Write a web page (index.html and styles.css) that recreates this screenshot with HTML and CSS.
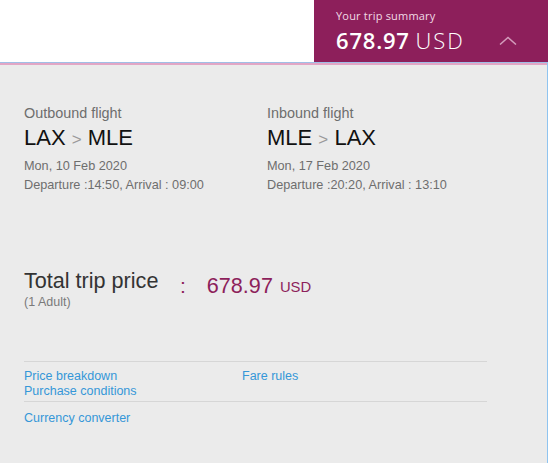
FILE: index.html
```html
<!DOCTYPE html>
<html lang="en">
<head>
    <meta charset="UTF-8">
    <meta name="viewport" content="width=device-width, initial-scale=1.0">
    <title>Trip summary</title>
    <link rel="stylesheet" href="styles.css">
</head>
<body>
    <div class="top-bar">
        <div class="trip-summary">
            <div class="summary-text">
                <div class="summary-label">Your trip summary</div>
                <div class="summary-price"><span class="amount">678.97</span> <span class="currency">USD</span></div>
            </div>
            <svg class="chevron" width="18" height="9" viewBox="0 0 18 9">
                <polyline points="1,8.5 9,1.5 17,8.5" fill="none" stroke="#d39cbb" stroke-width="1.5"/>
            </svg>
        </div>
    </div>

    <div class="panel">
        <div class="flights">
            <div class="flight">
                <div class="flight-label">Outbound flight</div>
                <div class="route">LAX <span class="arrow">&gt;</span> MLE</div>
                <div class="flight-info">Mon, 10 Feb 2020</div>
                <div class="flight-info">Departure :14:50, Arrival : 09:00</div>
            </div>
            <div class="flight">
                <div class="flight-label">Inbound flight</div>
                <div class="route">MLE <span class="arrow">&gt;</span> LAX</div>
                <div class="flight-info">Mon, 17 Feb 2020</div>
                <div class="flight-info">Departure :20:20, Arrival : 13:10</div>
            </div>
        </div>

        <div class="total">
            <div class="total-label">
                <div class="total-title">Total trip price</div>
                <div class="total-sub">(1 Adult)</div>
            </div>
            <span class="total-colon">:</span>
            <span class="total-price">678.97</span>
            <span class="total-currency">USD</span>
        </div>

        <div class="links">
            <div class="links-row">
                <div class="links-col">
                    <a href="#">Price breakdown</a>
                    <a href="#">Purchase conditions</a>
                </div>
                <div class="links-col">
                    <a href="#">Fare rules</a>
                </div>
            </div>
            <div class="links-row single">
                <a href="#">Currency converter</a>
            </div>
        </div>
    </div>
</body>
</html>
```

FILE: styles.css
```css
body {
    margin: 0;
    background-color: #fff;
    font-family: "Liberation Sans", Arial, sans-serif;
}

.top-bar {
    display: flex;
    justify-content: flex-end;
    height: 62px;
    padding-right: 2px;
}

.trip-summary {
    width: 234px;
    background-color: #8d1f5b;
    color: #fff;
    display: flex;
    align-items: flex-start;
    font-family: "Open Sans", sans-serif;
}

.summary-text {
    padding: 8px 0 0 22px;
}

.summary-label {
    font-size: 11px;
    line-height: 16px;
    letter-spacing: 0.2px;
    color: #f1dbe6;
}

.summary-price {
    font-size: 22px;
    line-height: 32px;
    white-space: nowrap;
}

.summary-price .amount {
    font-weight: 600;
    letter-spacing: 0.8px;
}

.summary-price .currency {
    font-weight: 300;
    letter-spacing: 2px;
}

.chevron {
    margin: 36px 0 0 34px;
}

.panel {
    width: 548px;
    height: 420px;
    background-color: #ebebeb;
    border-top: 1px solid #9fbfe6;
    border-right: 1px solid #8fc4f0;
    box-shadow: inset 0 2px 0 #e2a6c5;
    padding: 41px 0 0 24px;
    box-sizing: border-box;
}

.flights {
    display: flex;
}

.flight {
    width: 243px;
}

.flight-label {
    font-size: 14.4px;
    line-height: 18px;
    color: #6e6e6e;
}

.route {
    font-size: 22px;
    line-height: 26px;
    margin-top: 3px;
    color: #111;
}

.route .arrow {
    font-size: 17px;
    color: #9a9a9a;
}

.flight-info {
    font-size: 12.7px;
    line-height: 19px;
    color: #6e6e6e;
}

.route + .flight-info {
    margin-top: 4px;
}

.total {
    display: flex;
    align-items: flex-start;
    margin-top: 73px;
}

.total-label {
    width: 156px;
}

.total-title {
    font-size: 21.6px;
    line-height: 26px;
    color: #333;
}

.total-sub {
    font-size: 12.5px;
    line-height: 16px;
    color: #7a7a7a;
}

.total-colon {
    font-size: 21px;
    line-height: 26px;
    margin-top: 5px;
    color: #8d1f5b;
}

.total-price {
    font-size: 21.6px;
    line-height: 26px;
    margin: 5px 0 0 21px;
    color: #8d1f5b;
}

.total-currency {
    font-size: 14.8px;
    line-height: 26px;
    margin: 6px 0 0 7px;
    color: #8d1f5b;
}

.links {
    width: 463px;
    margin-top: 51px;
}

.links-row {
    display: flex;
    border-top: 1px solid #d6d6d6;
    padding: 7px 0 2px;
}

.links-row.single {
    padding-top: 9px;
}

.links-col {
    display: flex;
    flex-direction: column;
    width: 218px;
}

.links a {
    font-size: 12.5px;
    line-height: 15px;
    color: #3597d8;
    text-decoration: none;
}
```
